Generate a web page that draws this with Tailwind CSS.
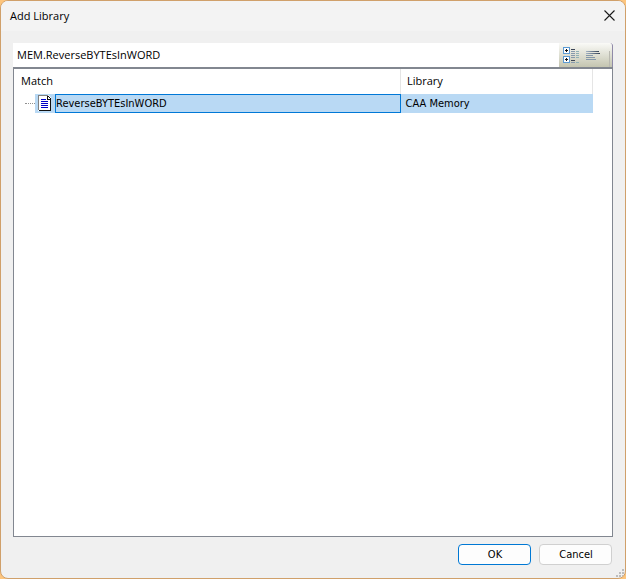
<!DOCTYPE html>
<html lang="en">
<head>
<meta charset="utf-8">
<meta name="viewport" content="width=device-width, initial-scale=1">
<title>Add Library</title>
<script src="https://cdn.jsdelivr.net/npm/@tailwindcss/browser@4"></script>
</head>
<body class="bg-[#fdc57d] text-black">
<main class="relative flex h-screen flex-col overflow-hidden rounded-lg border border-[#d0a06a] bg-[#f0f0f0] font-['Open_Sans','Noto_Sans',sans-serif] text-[11px]">
  <header class="flex h-[30px] shrink-0 items-center justify-between bg-[#f3f3f3] pr-[10px] pl-[9px]">
    <h1>Add Library</h1>
    <button type="button" aria-label="Close" class="mb-[2px] size-[11px]">
      <svg class="block size-[11px]" viewBox="0 0 11 11" fill="none" stroke="#1a1a1a" stroke-width="1.1"><path d="M.5.5l10 10M10.5.5l-10 10"/></svg>
    </button>
  </header>

  <div class="mx-3 mt-3 flex h-6 shrink-0 bg-white">
    <input type="text" aria-label="Search text" value="MEM.ReverseBYTEsInWORD" class="min-w-0 flex-1 bg-white pl-1 outline-none">
    <div class="flex w-[54px] shrink-0 items-start rounded-tr-[3px] border-r border-[#8f8aa8] bg-linear-to-b from-[#fafaf7] to-[#c4c5b0] pt-1 pl-1">
      <button type="button" aria-label="Group by category" class="mr-[6px] h-4 w-4">
        <svg class="block h-4 w-4" viewBox="0 0 16 16" shape-rendering="crispEdges">
          <g fill="#fff" stroke="#5b9bd5"><rect x=".5" y=".5" width="6" height="6"/><rect x=".5" y="9.5" width="6" height="6"/></g>
          <path fill="#111" d="M2 3h3v1H2zM3 2h1v3H3zM2 12h3v1H2zM3 11h1v3H3z"/>
          <path fill="#3c4657" d="M8 2h4v1H8zM8 13h4v1H8z"/>
          <path fill="#8799ac" d="M8 4h4v1H8zM8 6h4v1H8zM8 8h4v1H8zM8 10h4v1H8zM8 15h4v1H8z"/>
          <path fill="#8fb0b5" d="M13 4h3v1h-3zM13 6h3v1h-3zM13 8h3v1h-3zM13 10h3v1h-3zM13 15h3v1h-3z"/>
        </svg>
      </button>
      <button type="button" aria-label="Flat list" class="h-4 w-4">
        <svg class="block h-4 w-4" viewBox="0 0 16 16" shape-rendering="crispEdges">
          <defs><linearGradient id="bar"><stop stop-color="#a3b3c4"/><stop offset="1" stop-color="#344357"/></linearGradient></defs>
          <g fill="url(#bar)"><rect x="1" y="4" width="13" height="1"/><rect x="1" y="6" width="14" height="1"/></g>
          <g fill="#8497a9"><rect x="1" y="8" width="7" height="1"/><rect x="1" y="10" width="9" height="1"/><rect x="1" y="12" width="10" height="1"/></g>
        </svg>
      </button>
      <span class="mt-1 ml-auto h-4 w-px bg-[#b9b9b0]"></span><span class="h-4 w-[2px]"></span>
    </div>
  </div>

  <section class="mx-3 flex-1 overflow-hidden border border-t-2 border-[#828790] bg-white pr-[19px]">
    <table class="w-full table-fixed border-collapse text-left">
      <colgroup><col><col class="w-48"></colgroup>
      <thead>
        <tr class="h-[25px]">
          <th class="border-r border-[#e5e5e5] p-0 pl-[7px] font-normal">Match</th>
          <th class="border-r border-[#e5e5e5] p-0 pl-[6px] font-normal">Library</th>
        </tr>
      </thead>
      <tbody class="font-['DejaVu_Sans_Condensed','Open_Sans',sans-serif] text-[11px] leading-[18px]">
        <tr class="h-[19px]">
          <td class="p-0">
            <div class="flex h-[19px] items-center">
              <span class="ml-[11px] w-[10px] shrink-0 border-t border-dotted border-[#909090]"></span>
              <span class="flex h-full w-5 shrink-0 items-start bg-[#b9d9f4] pt-px pl-[3px]">
                <svg class="block h-4 w-[14px]" viewBox="0 0 14 16" shape-rendering="crispEdges"><path fill="#fff" d="M0 0h10l3 3v13H0z"/><path fill="#808080" d="M0 0h10v1H1v14H0z"/><path fill="#111" d="M9 1h1v3h3v12H1v-1h11V5H9zM10 1h1v1h-1zM11 2h1v1h-1zM12 3h1v1h-1z"/><path fill="#0000c8" d="M3 4h5v1H3zM3 6h7v1H3zM3 8h7v1H3zM3 10h7v1H3zM3 12h7v1H3z"/></svg>
              </span>
              <span class="h-full flex-1 border border-[#0078d7] bg-[#b9d9f4]">ReverseBYTEsInWORD</span>
            </div>
          </td>
          <td class="bg-[#b9d9f4] p-0 pt-px pl-[5px]">CAA Memory</td>
        </tr>
      </tbody>
    </table>
  </section>

  <footer class="flex shrink-0 justify-end gap-2 pt-[7px] pr-[13px] pb-[13px] font-['DejaVu_Sans_Condensed','Open_Sans',sans-serif] text-[11px]">
    <button type="button" class="h-[21px] w-[73px] rounded border border-[#0078d4] bg-[#fdfdfd] pt-px pl-px">OK</button>
    <button type="button" class="h-[21px] w-[73px] rounded border border-[#d0d0d0] bg-[#fdfdfd] pt-px pl-px">Cancel</button>
  </footer>

  <svg class="absolute right-px bottom-px size-2" viewBox="0 0 8 8" fill="#bdbdbd" aria-hidden="true"><path d="M6 0h2v2H6zM3 3h2v2H3zM6 3h2v2H6zM0 6h2v2H0zM3 6h2v2H3zM6 6h2v2H6z"/></svg>
</main>
</body>
</html>
